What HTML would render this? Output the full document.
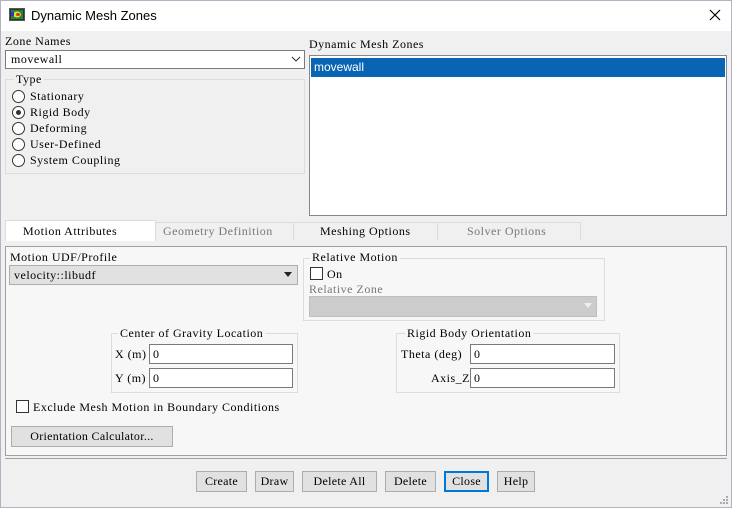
<!DOCTYPE html>
<html><head><style>
*{box-sizing:border-box;margin:0;padding:0}
body{width:732px;height:508px;overflow:hidden;background:#f0f0f0;position:relative;font-family:"Liberation Serif","Noto Serif CJK SC",serif;font-size:12px;letter-spacing:0.5px;color:#000}
.a{position:absolute}
.t{position:absolute;white-space:nowrap;line-height:14px}
.win{position:absolute;left:0;top:0;width:732px;height:508px;border:1px solid #b8b0c4}
.inp{position:absolute;background:#fff;border:1px solid #7a7a7a}
.grp{position:absolute;border:1px solid #dcdcdc}
.rad{position:absolute;width:13px;height:13px;border:1px solid #333;border-radius:50%;background:#fff}
.btn{position:absolute;height:21px;background:#e1e1e1;border:1px solid #adadad;text-align:center;line-height:19px;letter-spacing:0.3px}
.chk{position:absolute;width:13px;height:13px;border:1px solid #333;background:#fff}
</style></head><body>
<div class="a" style="left:0;top:0;width:732px;height:31px;background:#fff"></div>
<svg class="a" style="left:9px;top:8px" width="16" height="13"><rect x="0.5" y="0.5" width="15" height="12" fill="#333" stroke="#555"/><rect x="2" y="2" width="12" height="9" fill="#1a8a3a"/><ellipse cx="8" cy="6.5" rx="4" ry="3" fill="#e8e020"/><rect x="2" y="4" width="3" height="4" fill="#2040d0"/><ellipse cx="9" cy="6.5" rx="2" ry="1.5" fill="#d03020"/></svg>
<div class="t" style="left:31px;top:8px;font-family:'Liberation Sans',sans-serif;font-size:13px;letter-spacing:0;line-height:16px">Dynamic Mesh Zones</div>
<svg class="a" style="left:709px;top:9px" width="12" height="12"><path d="M1 1L11 11M11 1L1 11" stroke="#000" stroke-width="1.2"/></svg>

<div class="t" style="left:5px;top:34px">Zone Names</div>
<div class="inp" style="left:5px;top:50px;width:300px;height:19px"></div>
<div class="t" style="left:11px;top:52px">movewall</div>
<svg class="a" style="left:291px;top:56px" width="10" height="6"><path d="M1 1L5 5L9 1" stroke="#333" fill="none"/></svg>
<div class="grp" style="left:5px;top:79px;width:300px;height:95px"></div>
<div class="t" style="left:14px;top:72px;background:#f0f0f0;padding:0 2px">Type</div>
<div class="rad" style="left:12px;top:90px"></div><div class="t" style="left:30px;top:89px">Stationary</div>
<div class="rad" style="left:12px;top:106px"></div><div class="a" style="left:16px;top:110px;width:5px;height:5px;border-radius:50%;background:#333"></div><div class="t" style="left:30px;top:105px">Rigid Body</div>
<div class="rad" style="left:12px;top:122px"></div><div class="t" style="left:30px;top:121px">Deforming</div>
<div class="rad" style="left:12px;top:138px"></div><div class="t" style="left:30px;top:137px">User-Defined</div>
<div class="rad" style="left:12px;top:154px"></div><div class="t" style="left:30px;top:153px">System Coupling</div>

<div class="t" style="left:309px;top:37px">Dynamic Mesh Zones</div>
<div class="inp" style="left:309px;top:55px;width:418px;height:161px;border-color:#828790"></div>
<div class="a" style="left:311px;top:58px;width:414px;height:19px;background:#0a64b4"></div>
<div class="t" style="left:314px;top:60px;color:#fff;font-family:'Liberation Sans',sans-serif;font-size:12px;letter-spacing:0;line-height:15px">movewall</div>

<div class="a" style="left:5px;top:246px;width:722px;height:210px;background:#f7f7f7;border:1px solid #a0a0a0"></div>
<div class="a" style="left:155px;top:222px;width:426px;height:18px;background:#f0f0f0;border:1px solid #dcdcdc;border-bottom:none"></div>
<div class="a" style="left:293px;top:222px;width:1px;height:18px;background:#dcdcdc"></div>
<div class="a" style="left:437px;top:222px;width:1px;height:18px;background:#dcdcdc"></div>
<div class="a" style="left:5px;top:220px;width:151px;height:21px;background:#fff;border:1px solid #dcdcdc;border-bottom:none"></div>
<div class="t" style="left:23px;top:224px">Motion Attributes</div>
<div class="t" style="left:163px;top:224px;color:#777">Geometry Definition</div>
<div class="t" style="left:320px;top:224px">Meshing Options</div>
<div class="t" style="left:467px;top:224px;color:#777">Solver Options</div>

<div class="t" style="left:10px;top:250px">Motion UDF/Profile</div>
<div class="a" style="left:9px;top:265px;width:289px;height:20px;background:#e1e1e1;border:1px solid #adadad"></div>
<div class="t" style="left:14px;top:268px">velocity::libudf</div>
<svg class="a" style="left:284px;top:272px" width="8" height="5"><path d="M0 0H8L4 5Z" fill="#222"/></svg>

<div class="grp" style="left:303px;top:258px;width:302px;height:63px"></div>
<div class="t" style="left:310px;top:250px;background:#f7f7f7;padding:0 2px">Relative Motion</div>
<div class="chk" style="left:310px;top:267px"></div><div class="t" style="left:327px;top:267px">On</div>
<div class="t" style="left:309px;top:282px;color:#777">Relative Zone</div>
<div class="a" style="left:309px;top:296px;width:288px;height:21px;background:#cccccc;border:1px solid #bfbfbf"></div>
<svg class="a" style="left:584px;top:303px" width="8" height="5"><path d="M0 0H8L4 5Z" fill="#eee"/></svg>

<div class="grp" style="left:111px;top:333px;width:187px;height:60px"></div>
<div class="t" style="left:118px;top:326px;background:#f7f7f7;padding:0 2px">Center of Gravity Location</div>
<div class="t" style="left:115px;top:347px">X (m)</div>
<div class="inp" style="left:149px;top:344px;width:144px;height:20px"></div><div class="t" style="left:153px;top:347px">0</div>
<div class="t" style="left:115px;top:371px">Y (m)</div>
<div class="inp" style="left:149px;top:368px;width:144px;height:20px"></div><div class="t" style="left:153px;top:371px">0</div>

<div class="grp" style="left:396px;top:333px;width:224px;height:60px"></div>
<div class="t" style="left:405px;top:326px;background:#f7f7f7;padding:0 2px">Rigid Body Orientation</div>
<div class="t" style="left:401px;top:347px">Theta (deg)</div>
<div class="inp" style="left:470px;top:344px;width:145px;height:20px"></div><div class="t" style="left:474px;top:347px">0</div>
<div class="t" style="left:431px;top:371px">Axis_Z</div>
<div class="inp" style="left:470px;top:368px;width:145px;height:20px"></div><div class="t" style="left:474px;top:371px">0</div>

<div class="chk" style="left:16px;top:400px"></div>
<div class="t" style="left:33px;top:400px">Exclude Mesh Motion in Boundary Conditions</div>
<div class="btn" style="left:11px;top:426px;width:162px">Orientation Calculator...</div>

<div class="a" style="left:5px;top:458px;width:722px;height:1px;background:#a0a0a0"></div>
<div class="btn" style="left:196px;top:471px;width:51px">Create</div>
<div class="btn" style="left:255px;top:471px;width:39px">Draw</div>
<div class="btn" style="left:302px;top:471px;width:75px">Delete All</div>
<div class="btn" style="left:385px;top:471px;width:51px">Delete</div>
<div class="btn" style="left:444px;top:471px;width:45px;border:2px solid #0078d7;line-height:17px">Close</div>
<div class="btn" style="left:497px;top:471px;width:38px">Help</div>
<svg class="a" style="left:719px;top:495px" width="10" height="10"><g fill="#aaa"><rect x="7" y="1" width="2" height="2"/><rect x="4" y="4" width="2" height="2"/><rect x="7" y="4" width="2" height="2"/><rect x="1" y="7" width="2" height="2"/><rect x="4" y="7" width="2" height="2"/><rect x="7" y="7" width="2" height="2"/></g></svg>
<div class="win"></div>
</body></html>
